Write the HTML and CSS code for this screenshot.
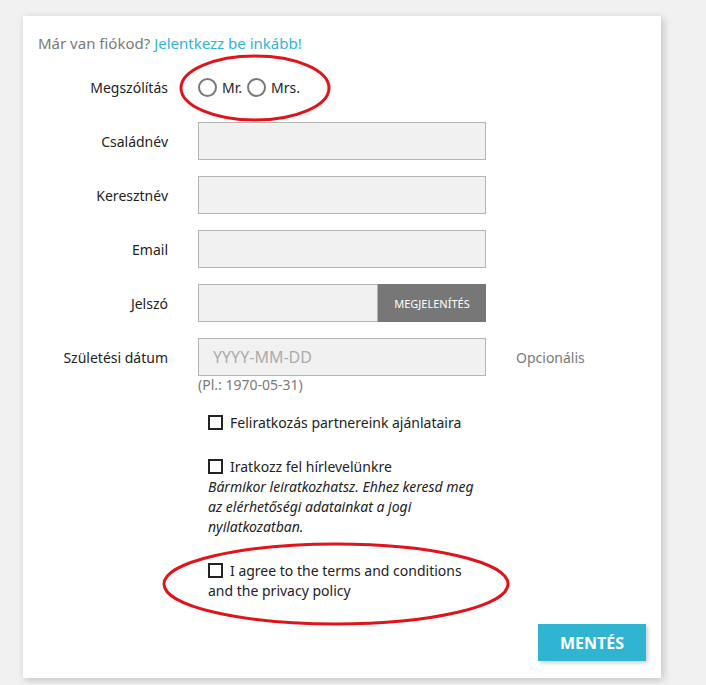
FILE: index.html
```html
<!DOCTYPE html>
<html lang="hu">
<head>
    <meta charset="UTF-8">
    <meta name="viewport" content="width=device-width, initial-scale=1.0">
    <title>Regisztráció</title>
    <link rel="stylesheet" href="styles.css">
</head>
<body>
    <div class="page">
        <div class="card">
            <p class="login-hint">Már van fiókod? <a href="#">Jelentkezz be inkább!</a></p>

            <form>
                <div class="form-row">
                    <label class="form-label">Megszólítás</label>
                    <div class="radios">
                        <label class="radio"><span class="radio-dot"></span>Mr.</label>
                        <label class="radio"><span class="radio-dot"></span>Mrs.</label>
                    </div>
                </div>

                <div class="form-row">
                    <label class="form-label">Családnév</label>
                    <input class="field" type="text">
                </div>

                <div class="form-row">
                    <label class="form-label">Keresztnév</label>
                    <input class="field" type="text">
                </div>

                <div class="form-row">
                    <label class="form-label">Email</label>
                    <input class="field" type="email">
                </div>

                <div class="form-row">
                    <label class="form-label">Jelszó</label>
                    <div class="password-group">
                        <input class="field" type="password">
                        <button type="button" class="show-btn">Megjelenítés</button>
                    </div>
                </div>

                <div class="form-row date-row">
                    <label class="form-label">Születési dátum</label>
                    <input class="field" type="text" placeholder="YYYY-MM-DD">
                    <span class="optional">Opcionális</span>
                    <span class="hint">(Pl.: 1970-05-31)</span>
                </div>

                <div class="checks">
                    <div class="check-item">
                        <span class="box"></span>Feliratkozás partnereink ajánlataira
                    </div>
                    <div class="check-item">
                        <span class="box"></span>Iratkozz fel hírlevelünkre<br>
                        <em>Bármikor leiratkozhatsz. Ehhez keresd meg az elérhetőségi adatainkat a jogi nyilatkozatban.</em>
                    </div>
                    <div class="check-item">
                        <span class="box"></span>I agree to the terms and conditions and the privacy policy
                    </div>
                </div>

                <div class="form-footer">
                    <button type="button" class="save-btn">Mentés</button>
                </div>
            </form>
        </div>
    </div>

    <svg class="marks" width="706" height="685" viewBox="0 0 706 685">
        <ellipse cx="255" cy="88" rx="74" ry="32" />
        <ellipse cx="336" cy="584" rx="172" ry="40" />
    </svg>
</body>
</html>
```

FILE: styles.css
```css
body {
    margin: 0;
    background: #f1f1f1;
    font-family: 'Noto Sans', sans-serif;
    font-size: 14px;
    color: #232323;
}

.page {
    padding: 16px 0 6px 23px;
}

.card {
    width: 638px;
    box-sizing: border-box;
    background: #fff;
    padding: 17px 15px 17px;
    box-shadow: 2px 2px 8px rgba(0, 0, 0, 0.2);
}

.login-hint {
    margin: 0 0 14px;
    font-size: 15px;
    line-height: 21px;
    color: #7a7a7a;
}

.login-hint a {
    color: #2fb5d2;
    text-decoration: none;
}

.form-row {
    display: grid;
    grid-template-columns: 130px 288px auto;
    column-gap: 30px;
    align-items: center;
    height: 38px;
    margin-bottom: 16px;
}

.form-label {
    text-align: right;
}

.radios {
    display: flex;
    align-items: center;
}

.radio {
    display: flex;
    align-items: center;
    margin-right: 5px;
}

.radio-dot {
    width: 19px;
    height: 19px;
    box-sizing: border-box;
    border: 2px solid #7a7a7a;
    border-radius: 50%;
    margin-right: 5px;
}

.field {
    width: 100%;
    height: 38px;
    box-sizing: border-box;
    background: #f1f1f1;
    border: 1px solid #b5b5b5;
    padding: 0 14px;
    font-family: 'Noto Sans', sans-serif;
    font-size: 16px;
    color: #232323;
}

.field::placeholder {
    color: #acacac;
}

.password-group {
    display: flex;
}

.password-group .field {
    flex: 1;
}

.show-btn {
    width: 108px;
    height: 38px;
    border: none;
    background: #777;
    color: #fff;
    font-family: 'Noto Sans', sans-serif;
    font-size: 11px;
    text-transform: uppercase;
    padding: 0;
}

.date-row {
    height: auto;
    grid-template-rows: 38px auto;
    margin-bottom: 0;
}

.optional {
    color: #7a7a7a;
}

.hint {
    grid-column: 2;
    grid-row: 2;
    color: #7a7a7a;
    line-height: 18px;
}

.checks {
    padding-left: 170px;
    width: 280px;
    margin-top: 19px;
}

.check-item {
    line-height: 20px;
    margin-bottom: 24px;
}

.check-item:last-child {
    margin-bottom: 23px;
}

.box {
    display: inline-block;
    width: 15px;
    height: 15px;
    box-sizing: border-box;
    border: 2px solid #232323;
    vertical-align: -2px;
    margin-right: 7px;
}

.form-footer {
    text-align: right;
}

.save-btn {
    height: 37px;
    padding: 0 22px;
    border: none;
    background: #2fb5d2;
    color: #fff;
    font-family: 'Noto Sans', sans-serif;
    font-size: 16px;
    font-weight: 700;
    text-transform: uppercase;
    box-shadow: 2px 2px 4px rgba(0, 0, 0, 0.2);
}

.marks {
    position: absolute;
    top: 0;
    left: 0;
    pointer-events: none;
}

.marks ellipse {
    fill: none;
    stroke: #e0141b;
    stroke-width: 3;
}
```
